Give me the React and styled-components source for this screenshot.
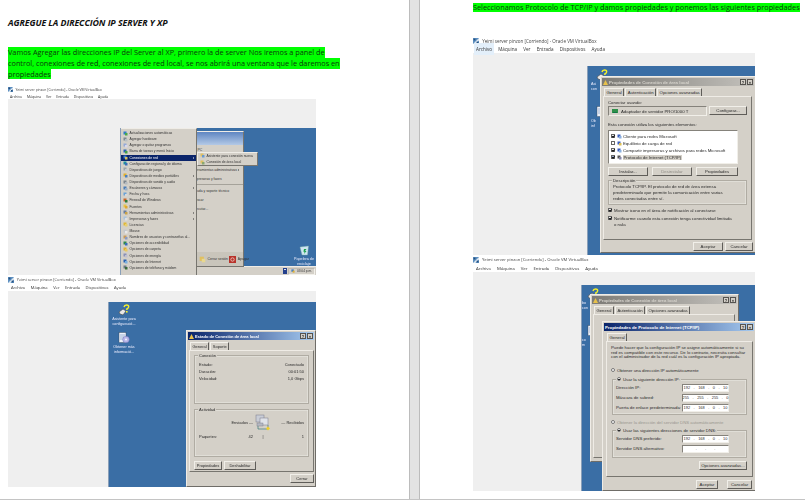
import React from "react";
import styled, { createGlobalStyle } from "styled-components";

const Global = createGlobalStyle`
  html, body { margin: 0; padding: 0; background: #fff; overflow: hidden; }
  * { box-sizing: border-box; }
`;

const Viewer = styled.div`
  display: flex; width: 805px; height: 500px; background: #fff;
  border-bottom: 1px solid #c4c4c4; overflow: hidden;
  font-family: "Open Sans", "Liberation Sans", sans-serif;
`;
const LeftPage = styled.section`
  flex: none; width: 409px; padding: 18px 0 0 8px; display: flex; flex-direction: column;
`;
const Gutter = styled.div`
  flex: none; width: 11px; background: #e3e3e3; border-left: 1px solid #bcbcbc; border-right: 1px solid #bcbcbc;
`;
const RightPage = styled.section`
  flex: 1; min-width: 0; padding: 3px 0 0 53px; display: flex; flex-direction: column;
`;
const Heading = styled.h1`
  margin: 0 0 19px; height: 10px; font-size: 8.8px; line-height: 10px; font-weight: 700; font-style: italic; color: #111;
  letter-spacing: -0.07px; white-space: nowrap;
`;
const Para = styled.div`margin-bottom: ${p => p.$mb}px;`;
const Mark = styled.span`
  display: block; width: fit-content; height: ${p => p.$h || 11}px; line-height: ${p => p.$h || 11}px;
  background: #00ff00; font-size: 7.3px; color: #0a3a0a; white-space: nowrap;
`;

const Shot = styled.figure`
  margin: 0; width: ${p => p.$w}px; font-family: "Open Sans", sans-serif; filter: blur(0.35px);
`;
const VmTitle = styled.div`
  height: ${p => p.$h}px; display: flex; align-items: center; gap: 0.7em;
  font-size: ${p => p.$fs}px; color: #444; white-space: nowrap;
`;
const VmMenu = styled.div`
  height: ${p => p.$h}px; display: flex; align-items: center; gap: 1.35em; padding-left: ${p => p.$pl}px;
  font-size: ${p => p.$fs}px; color: #333; white-space: nowrap;
`;
const VmMenuItem = styled.span`
  ${p => p.$hot && `background:#e3effa; box-shadow: 0 0 0 2px #e3effa; height: 100%; display:flex; align-items:center;`}
`;
const VmBody = styled.div`
  height: ${p => p.$h}px; background: #efefef; display: flex; justify-content: flex-end; align-items: flex-end;
`;
const Desktop = styled.div`
  position: relative; width: ${p => p.$w}px; height: ${p => p.$h}px; background: #3a6ea5; overflow: hidden;
  display: flex; flex-direction: column; justify-content: flex-end;
  font-family: "Liberation Sans", sans-serif; border-left: 1px solid #8a9fb8;
`;
const Taskbar = styled.div`
  height: 9px; background: #d4d0c8; border-top: 1px solid #efece6; display: flex; justify-content: flex-end; align-items: center; gap: 1px; padding-right: 1px;
`;
const Tray = styled.div`
  display: flex; align-items: center; gap: 2px; height: 7px; padding: 0 2px; font-size: 3.2px; color: #333;
  border: 1px solid #bdb9b0; border-right-color: #f2f0ea; border-bottom-color: #f2f0ea;
`;
const Float = styled.div`
  position: absolute; left: ${p => p.$l}px; top: ${p => p.$t}px; width: ${p => p.$w}px; height: ${p => p.$h}px;
`;
const DeskIconBox = styled(Float)`
  display: flex; flex-direction: column; align-items: center; gap: 1px; color: #eef; font-size: 3.7px; line-height: 4.6px; text-align: center; white-space: nowrap;
`;
const DeskLabel = styled.span`
  ${p => p.$edge && `align-self: flex-start; margin-left: ${p.$edge}px; text-align: left;`}
`;

const StartMenu = styled(Float)`
  background: #d4d0c8; border-right: 1px solid #77756f; border-top: 1px solid #efece6; display: flex; flex-direction: column; padding-top: 1px;
`;
const StartItem = styled.div`
  height: 6.13px; display: flex; align-items: center; gap: 2px; padding: 0 2px 0 1.5px; font-size: 3.4px; white-space: nowrap;
  color: ${p => p.$on ? "#fff" : "#333"}; background: ${p => p.$on ? "#0a246a" : "transparent"};
`;
const Grow = styled.span`flex: 1;`;
const Arrow = styled.i`
  width: 0; height: 0; border-left: 1.6px solid currentColor; border-top: 1.3px solid transparent; border-bottom: 1.3px solid transparent;
`;
const StartPanel = styled(Float)`
  background: #d4d0c8; border: 1px solid #efece6; border-right-color: #77756f; border-bottom-color: #77756f; display: flex; flex-direction: column;
`;
const PanelHead = styled.div`
  height: 13px; flex: none; background: linear-gradient(#5f86c2, #b3c9e6);
`;
const PanelItem = styled.div`
  height: ${p => p.$h || 9}px; flex: none; display: flex; align-items: center; padding: 0 4px 0 15px; font-size: 3.4px; color: #333; white-space: nowrap;
`;
const PanelRule = styled.div`height: 1px; flex: none; margin: 1px 0; background: #a5a29a;`;
const PanelFoot = styled.div`
  margin-top: auto; height: 14px; background: #c9c5bb; display: flex; align-items: center; gap: 1.5px; padding-left: 21px; font-size: 3.4px; color: #333; white-space: nowrap;
`;
const Submenu = styled(Float)`
  background: #d4d0c8; border: 1px solid #efece6; border-right-color: #77756f; border-bottom-color: #77756f;
  display: flex; flex-direction: column; justify-content: center; gap: 0.5px; z-index: 2;
`;

const Win = styled(Float)`
  background: #d4d0c8; color: #2a2a2a; font-size: ${p => p.$fs}px; display: flex; flex-direction: column; padding: 1px;
  border: 1px solid; border-color: #efece6 #6f6d68 #6f6d68 #efece6; z-index: ${p => p.$z || 1};
`;
const WinTitle = styled.div`
  height: 8px; flex: none; display: flex; align-items: center; gap: 1px; padding: 0 1px; font-weight: 700; white-space: nowrap;
  color: ${p => p.$on ? "#fff" : "#d6d3cc"};
  background: linear-gradient(90deg, ${p => p.$on ? "#0a246a, #a6caf0" : "#7d7b76, #c3c1bc"});
`;
const WinCtl = styled.span`
  width: 6px; height: 6px; background: #d4d0c8; border: 0.5px solid #55534f; color: #222; font-size: 4px; line-height: 5px; text-align: center; font-weight: 700; flex: none;
`;
const TabRow = styled.div`
  display: flex; height: 8px; margin: 2px 0 0 ${p => p.$ml}px; flex: none; position: relative; z-index: 1;
`;
const Tab = styled.span`
  padding: 0 1.5px; line-height: 8px; white-space: nowrap; border: 0.5px solid #f2f0ea; border-right-color: #5f5d59; border-bottom: 0; margin-right: 1px; background: #d4d0c8;
`;
const TabPanel = styled.div`
  flex: 1; min-height: 0; margin: ${p => p.$m}; padding: ${p => p.$p}; display: flex; flex-direction: column; gap: ${p => p.$gap || 0}px;
  border: 1px solid; border-color: #efece6 #77756f #77756f #efece6;
`;
const Group = styled.div`
  position: relative; flex: none; height: ${p => p.$h}px; padding: ${p => p.$p}; margin: ${p => p.$m || 0};
  border: 1px solid #b0aca3; box-shadow: inset 0 0 0 0.5px #ecebe6;
`;
const DescGroup = styled(Group)`line-height: 6px; white-space: nowrap;`;
const Legend = styled.span`
  position: absolute; top: -3px; left: 3px; background: #d4d0c8; padding: 0 1px; line-height: 5px; white-space: nowrap;
`;
const KV = styled.div`
  display: flex; justify-content: space-between; height: 7px; line-height: 7px; white-space: nowrap;
`;
const ActivityGrid = styled.div`
  display: grid; grid-template-columns: 22px 32px 20px 1fr; grid-template-rows: 19px 8px; align-items: center;
`;
const Cell = styled.span`
  text-align: ${p => p.$a || "left"}; white-space: nowrap; display: ${p => p.$flex ? "flex" : "block"}; justify-content: center;
`;
const Btn = styled.span`
  flex: none; display: flex; align-items: center; justify-content: center; width: ${p => p.$w}px; height: ${p => p.$h || 9}px;
  white-space: nowrap; color: ${p => p.$off ? "#8f8c85" : "#2a2a2a"};
  border: 1px solid; border-color: #f1efe9 #5f5d59 #5f5d59 #f1efe9;
`;
const BtnRow = styled.div`
  display: flex; gap: ${p => p.$gap || 2}px; margin: ${p => p.$m || 0}; justify-content: ${p => p.$end ? "flex-end" : "flex-start"}; flex: none;
`;
const Label = styled.div`
  line-height: ${p => p.$lh || 6}px; height: ${p => p.$lh || 6}px; margin: ${p => p.$m || 0}; white-space: nowrap; flex: none;
`;
const AdapterBox = styled.div`
  flex: 1; height: 10px; display: flex; align-items: center; gap: 3px; padding-left: 3px; white-space: nowrap;
  border: 1px solid; border-color: #85827b #f1efe9 #f1efe9 #85827b;
`;
const ListBox = styled.div`
  height: 34px; width: 130px; background: #fff; padding: 1.5px 0 0 2px; border: 1px solid; border-color: #85827b #f1efe9 #f1efe9 #85827b; flex: none;
`;
const ListRow = styled.div`
  height: 7px; display: flex; align-items: center; gap: 1.5px; white-space: nowrap;
`;
const Box = styled.i`
  width: 4px; height: 4px; flex: none; background: ${p => p.$bg || "#fff"}; border: 0.7px solid #666; position: relative;
  ${p => p.$on && `&::after{content:"";position:absolute;left:0.3px;top:0.1px;width:2px;height:1.2px;border-left:0.8px solid #111;border-bottom:0.8px solid #111;transform:rotate(-45deg);}`}
`;
const Dot = styled.i`
  width: 4px; height: 4px; flex: none; border-radius: 50%; background: #fff; border: 0.7px solid #777; display: flex; align-items: center; justify-content: center;
  ${p => p.$on && `&::after{content:"";width:1.4px;height:1.4px;border-radius:50%;background:#111;}`}
`;
const Selected = styled.span`background: #d4d0c8; padding: 0 0.5px;`;
const CheckLine = styled.div`
  display: flex; gap: 2px; align-items: flex-start; line-height: 6.5px; white-space: nowrap; flex: none; margin: ${p => p.$m || 0};
`;
const RadioLine = styled.div`
  display: flex; gap: 2px; align-items: center; height: ${p => p.$h || 7}px; white-space: nowrap; flex: none; margin: ${p => p.$m || 0}; color: ${p => p.$off ? "#99968f" : "inherit"};
`;
const FieldRow = styled.div`
  display: flex; align-items: center; justify-content: space-between; height: 8px; margin-bottom: ${p => p.$mb ?? 2}px; white-space: nowrap;
`;
const IpBox = styled.span`
  width: 47px; height: 8px; flex: none; background: #fff; display: flex; justify-content: center; gap: 3.5px; align-items: center; font-size: 3.9px;
  border: 0.7px solid; border-color: #85827b #f1efe9 #f1efe9 #85827b;
`;

/* ---- drawings ---- */
const Glyph = ({ s = 5, c = "#3b7bc8", d = "#e0b030" }) => (
  <svg width={s} height={s} viewBox="0 0 10 10" style={{ flex: "none" }}>
    <rect x="1" y="1" width="6" height="6" fill={c} />
    <rect x="4" y="4" width="5" height="5" fill={d} />
  </svg>
);
const VmLogo = ({ s }) => (
  <svg width={s} height={s} viewBox="0 0 10 10" style={{ flex: "none" }}>
    <rect width="10" height="10" fill="#5d8fc0" />
    <path d="M0 10 L10 0 V4 L4 10Z" fill="#dfe9f2" />
    <rect x="1" y="1" width="3" height="3" fill="#24507f" />
    <rect x="6" y="6" width="3" height="3" fill="#24507f" />
  </svg>
);
const HelpIcon = () => (
  <svg width="12" height="12" viewBox="0 0 12 12" style={{ flex: "none" }}>
    <path d="M1 8 L5 5 L8 7 L5 11 L2 10Z" fill="#e8e8e8" stroke="#444" strokeWidth="0.6" />
    <path d="M6 3 Q6.5 1 8.5 1 Q11 1 10.6 3 Q10.4 4.3 9 4.8 L8.8 6" fill="none" stroke="#f6f02a" strokeWidth="1.5" />
    <rect x="8" y="7" width="1.6" height="1.6" fill="#f6f02a" />
  </svg>
);
const InfoIcon = () => (
  <svg width="12" height="12" viewBox="0 0 12 12" style={{ flex: "none" }}>
    <rect x="1" y="0.5" width="7" height="10" fill="#eef2fa" stroke="#345" strokeWidth="0.4" />
    <path d="M2 3h5M2 5h4M2 7h3" stroke="#6a8ac0" strokeWidth="0.6" />
    <circle cx="8" cy="7.5" r="3.3" fill="#b7b5e8" stroke="#5b63a8" strokeWidth="0.4" />
    <circle cx="8" cy="7.5" r="1" fill="#f4f4ff" />
  </svg>
);
const BinIcon = () => (
  <svg width="11" height="11" viewBox="0 0 11 11" style={{ flex: "none" }}>
    <path d="M1 2 L9.5 1 L8.5 10 H3Z" fill="#cfe6f0" stroke="#7aa" strokeWidth="0.4" />
    <path d="M5 4 L7.5 4 L6 6 L7.5 6 L5 9 L5.6 6.8 L4.4 6.8Z" fill="#19a04a" />
  </svg>
);
const NetIcon = () => (
  <svg width="18" height="18" viewBox="0 0 18 18">
    <rect x="2" y="1" width="8" height="7" fill="#c9cdd6" stroke="#778" strokeWidth="0.5" />
    <rect x="6" y="4" width="8" height="7" fill="#dfe2e8" stroke="#778" strokeWidth="0.5" />
    <rect x="3" y="9" width="6" height="3" fill="#b4b8c2" stroke="#778" strokeWidth="0.4" />
    <path d="M4 12 V15 H14 M14 11 V15" fill="none" stroke="#3a7a7a" strokeWidth="0.7" />
    <path d="M12 14.5 L14 12.5 L16 14.5 L14 16.5Z" fill="#f2cf2a" />
  </svg>
);
const ShieldLogo = () => (
  <svg width="4" height="6" viewBox="0 0 4 6" style={{ flex: "none" }}><rect width="4" height="6" fill="#24408c" /><rect x="1" y="1" width="2" height="1" fill="#dde" /></svg>
);
const Power = ({ c }) => (
  <svg width="7" height="7" viewBox="0 0 7 7" style={{ flex: "none" }}><rect width="7" height="7" fill={c} /><circle cx="3.5" cy="3.5" r="1.7" fill="none" stroke="#f3e9e0" strokeWidth="0.7" /></svg>
);
const NicGreen = () => (
  <svg width="6" height="4" viewBox="0 0 6 4" style={{ flex: "none" }}><rect width="6" height="4" fill="#2f8f4a" /><rect x="1" y="3" width="4" height="1" fill="#174" /></svg>
);
const WarnSmall = () => (
  <svg width="5" height="5" viewBox="0 0 5 5" style={{ flex: "none" }}><path d="M2.5 0 L5 5 H0Z" fill="#e8c14a" /></svg>
);

const startItems = [
  ["Actualizaciones automáticas", "#2f7dc8", "#4aa84a"],
  ["Agregar hardware", "#7b8a94", "#b9c0c4"],
  ["Agregar o quitar programas", "#94a9d8", "#d8d8ec"],
  ["Barra de tareas y menú Inicio", "#2a62b0", "#45a04a"],
  ["Conexiones de red", "#3b7bc8", "#d8c060", true, true],
  ["Configuración regional y de idioma", "#1f8f9f", "#3a6fb8"],
  ["Dispositivos de juego", "#9aa4ac", "#c8ccd0"],
  ["Dispositivos de medios portátiles", "#e0b030", "#4a80c0", false, true],
  ["Dispositivos de sonido y audio", "#7d868e", "#b4bac0"],
  ["Escáneres y cámaras", "#4a7db8", "#9ab0c8", false, true],
  ["Fecha y hora", "#6aa2d8", "#d8d8d8"],
  ["Firewall de Windows", "#c8662a", "#2f7a3a"],
  ["Fuentes", "#e8c24a", "#e0a830"],
  ["Herramientas administrativas", "#6a7fa0", "#c8a24a", false, true],
  ["Impresoras y faxes", "#a8c4e0", "#e0e0e0", false, true],
  ["Licencias", "#e0b838", "#e8d070"],
  ["Mouse", "#c4c8cc", "#e8e8e8"],
  ["Nombres de usuarios y contraseñas al...", "#c89a5a", "#8a9ac0"],
  ["Opciones de accesibilidad", "#2f8a4a", "#3a6fb8"],
  ["Opciones de carpeta", "#e0b030", "#e8c860"],
  ["Opciones de energía", "#8a90b8", "#c0c0d0"],
  ["Opciones de Internet", "#2a62b0", "#7ab0e0"],
  ["Opciones de teléfono y módem", "#6a7a88", "#3a6a3a"],
];

const menuNames = ["Archivo", "Máquina", "Ver", "Entrada", "Dispositivos", "Ayuda"];

const VmChrome = ({ w, titleH, menuH, titleFs, menuFs, logo, pl, hot, bodyH, children }) => (
  <Shot $w={w}>
    <VmTitle $h={titleH} $fs={titleFs}><VmLogo s={logo} />Yeimi server pinzon [Corriendo] - Oracle VM VirtualBox</VmTitle>
    <VmMenu $h={menuH} $fs={menuFs} $pl={pl}>
      {menuNames.map((n, i) => <VmMenuItem key={n} $hot={hot && i === 0}>{n}</VmMenuItem>)}
    </VmMenu>
    <VmBody $h={bodyH}>{children}</VmBody>
  </Shot>
);

const DeskIcon = ({ l, t, icon, edge, children }) => (
  <DeskIconBox $l={l} $t={t} $w={30} $h={26}>{icon}<DeskLabel $edge={edge}>{children}</DeskLabel></DeskIconBox>
);

const TitleRow = ({ on, children, warn = true }) => (
  <WinTitle $on={on}>
    {warn && <WarnSmall />}{children}<Grow /><WinCtl>?</WinCtl><WinCtl>×</WinCtl>
  </WinTitle>
);

const ConnTabs = () => (
  <TabRow $ml={2}><Tab>General</Tab><Tab>Autenticación</Tab><Tab>Opciones avanzadas</Tab></TabRow>
);

export default function App() {
  return (
    <Viewer>
      <Global />
      <LeftPage>
        <Heading>AGREGUE LA DIRECCIÓN IP SERVER Y XP</Heading>
        <Para $mb={6}>
          <Mark>Vamos Agregar las direcciones IP del Server al XP, primero la de server Nos iremos a panel de</Mark>
          <Mark>control, conexiones de red, conexiones de red local, se nos abrirá una ventana que le daremos en</Mark>
          <Mark $h={10}>propiedades</Mark>
        </Para>
        <VmChrome w={308} titleH={8} menuH={6} titleFs={3.4} menuFs={3.5} logo={5} pl={2} bodyH={176}>
          <Desktop $w={196} $h={147}>
            <DeskIcon l={168} t={117} icon={<BinIcon />}>Papelera de<br />reciclaje</DeskIcon>
            <StartPanel $l={56} $t={3} $w={67} $h={136}>
              <PanelHead />
              <PanelItem $h={10}>Mi PC</PanelItem>
              <PanelItem $h={10} />
              <PanelItem>Herramientas administrativas<Grow /><Arrow /></PanelItem>
              <PanelItem>Impresoras y faxes</PanelItem>
              <PanelRule />
              <PanelItem>Ayuda y soporte técnico</PanelItem>
              <PanelItem>Buscar</PanelItem>
              <PanelItem>Ejecutar...</PanelItem>
              <PanelFoot><Glyph s={7} c="#e0c060" d="#e8d890" />Cerrar sesión<Power c="#b8322a" />Apagar</PanelFoot>
            </StartPanel>
            <StartMenu $l={0} $t={0} $w={76} $h={147}>
              {startItems.map(([n, c, d, on, arrow]) => (
                <StartItem key={n} $on={on}>
                  <Glyph s={5} c={c} d={d} />{n}<Grow />{arrow && <Arrow />}
                </StartItem>
              ))}
            </StartMenu>
            <Submenu $l={76} $t={24} $w={61} $h={14}>
              <StartItem><Glyph s={5} c="#e0c060" d="#6a9ad0" />Asistente para conexión nueva</StartItem>
              <StartItem><Glyph s={5} c="#e0c060" d="#8aa870" />Conexión de área local</StartItem>
            </Submenu>
            <Taskbar>
              <ShieldLogo />
              <Tray><Glyph s={4} c="#3b7bc8" d="#e0b030" />03:04 p.m.</Tray>
            </Taskbar>
          </Desktop>
        </VmChrome>

        <VmChrome w={308} titleH={9} menuH={7} titleFs={3.9} menuFs={4.1} logo={6} pl={3} bodyH={196}>
          <Desktop $w={208} $h={185}>
            <DeskIcon l={0} t={2} icon={<HelpIcon />}>Asistente para<br />configuració...</DeskIcon>
            <DeskIcon l={0} t={30} icon={<InfoIcon />}>Obtener más<br />informació...</DeskIcon>
            <Win $l={77} $t={28} $w={130} $h={157} $fs={4}>
              <TitleRow on>Estado de Conexión de área local</TitleRow>
              <TabRow $ml={2}><Tab>General</Tab><Tab>Soporte</Tab></TabRow>
              <TabPanel $m="0 0 0 1px" $p="4px 4px 0" $gap={5}>
                <Group $h={49} $p="5px 4px">
                  <Legend>Conexión</Legend>
                  <KV><span>Estado:</span><span>Conectado</span></KV>
                  <KV><span>Duración:</span><span>00:01:50</span></KV>
                  <KV><span>Velocidad:</span><span>1,0 Gbps</span></KV>
                </Group>
                <Group $h={48} $p="3px 4px">
                  <Legend>Actividad</Legend>
                  <ActivityGrid>
                    <span />
                    <Cell $a="right">Enviados —</Cell>
                    <Cell $flex><NetIcon /></Cell>
                    <Cell $a="right">— Recibidos</Cell>
                    <span>Paquetes:</span>
                    <Cell $a="right">42</Cell>
                    <Cell $a="center">|</Cell>
                    <Cell $a="right">1</Cell>
                  </ActivityGrid>
                </Group>
                <BtnRow $m="-1px 0 0">
                  <Btn $w={28}>Propiedades</Btn>
                  <Btn $w={32}>Deshabilitar</Btn>
                </BtnRow>
              </TabPanel>
              <BtnRow $end $m="2px 0 2px"><Btn $w={24}>Cerrar</Btn></BtnRow>
            </Win>
          </Desktop>
        </VmChrome>
      </LeftPage>

      <Gutter />

      <RightPage>
        <Para $mb={24}>
          <Mark $h={9}>Seleccionamos Protocolo de TCP/IP y damos propiedades y ponemos las siguientes propiedades</Mark>
        </Para>
        <VmChrome w={282} titleH={9} menuH={8} titleFs={4.5} menuFs={4.6} logo={6} pl={3} hot bodyH={202}>
          <Desktop $w={168} $h={189}>
            <DeskIcon l={-1} t={3} edge={4} icon={<HelpIcon />}>Asi<br />con</DeskIcon>
            <DeskIcon l={-1} t={40} edge={4} icon={<InfoIcon />}>Ob<br />inf</DeskIcon>
            <Win $l={12} $t={10} $w={156} $h={177} $fs={4.3}>
              <TitleRow>Propiedades de Conexión de área local</TitleRow>
              <ConnTabs />
              <TabPanel $m="0 2px 0 1px" $p="3px 4px 0">
                <Label>Conectar usando:</Label>
                <BtnRow $m="0 0 0">
                  <AdapterBox><NicGreen />Adaptador de servidor PRO/1000 T</AdapterBox>
                  <Btn $w={38}>Configurar...</Btn>
                </BtnRow>
                <Label $m="6px 0 2px">Esta conexión utiliza los siguientes elementos:</Label>
                <ListBox>
                  <ListRow><Box $on /><Glyph s={5} c="#3b5fc0" d="#8ab0e0" />Cliente para redes Microsoft</ListRow>
                  <ListRow><Box /><Glyph s={5} c="#3b5fc0" d="#e0c050" />Equilibrio de carga de red</ListRow>
                  <ListRow><Box $on /><Glyph s={5} c="#3b5fc0" d="#8ab0e0" />Compartir impresoras y archivos para redes Microsoft</ListRow>
                  <ListRow><Box $on $bg="#9fb3d8" /><Glyph s={5} c="#555" d="#88a" /><Selected>Protocolo de Internet (TCP/IP)</Selected></ListRow>
                </ListBox>
                <BtnRow $m="3px 0 0" $gap={4}>
                  <Btn $w={40}>Instalar...</Btn>
                  <Btn $w={40} $off>Desinstalar</Btn>
                  <Btn $w={42}>Propiedades</Btn>
                </BtnRow>
                <DescGroup $h={25} $p="3px 4px" $m="4px 0 3px">
                  <Legend>Descripción</Legend>
                  <div>Protocolo TCP/IP. El protocolo de red de área extensa</div>
                  <div>predeterminado que permite la comunicación entre varias</div>
                  <div>redes conectadas entre sí.</div>
                </DescGroup>
                <CheckLine><Box $on />Mostrar icono en el área de notificación al conectarse</CheckLine>
                <CheckLine $m="1px 0 0"><Box $on /><div>Notificarme cuando esta conexión tenga conectividad limitada<br />o nula</div></CheckLine>
              </TabPanel>
              <BtnRow $end $gap={2} $m="2px 1px 0"><Btn $w={30}>Aceptar</Btn><Btn $w={28}>Cancelar</Btn></BtnRow>
            </Win>
          </Desktop>
        </VmChrome>

        <VmChrome w={282} titleH={9} menuH={8} titleFs={4.2} menuFs={4.35} logo={6} pl={3} bodyH={219}>
          <Desktop $w={174} $h={206}>
            <DeskIcon l={-4} t={3} edge={4} icon={<HelpIcon />}>bo<br />con</DeskIcon>
            <DeskIcon l={-4} t={40} edge={4} icon={<InfoIcon />}>co<br />m</DeskIcon>
            <Win $l={8} $t={9} $w={149} $h={168} $fs={4.2}>
              <TitleRow>Propiedades de Conexión de área local</TitleRow>
              <ConnTabs />
              <TabPanel $m="0 2px 2px 1px" $p="3px 4px" />
            </Win>
            <Win $l={20} $t={36} $w={154} $h={170} $fs={4.3} $z={2}>
              <TitleRow on warn={false}>Propiedades de Protocolo de Internet (TCP/IP)</TitleRow>
              <TabRow $ml={3}><Tab>General</Tab></TabRow>
              <TabPanel $m="0 1px 0 2px" $p="4px 4px 0">
                <Label $lh={4.6}>Puede hacer que la configuración IP se asigne automáticamente si su</Label>
                <Label $lh={4.6}>red es compatible con este recurso. De lo contrario, necesita consultar</Label>
                <Label $lh={4.6}>con el administrador de la red cuál es la configuración IP apropiada.</Label>
                <RadioLine $m="7px 0 0"><Dot />Obtener una dirección IP automáticamente</RadioLine>
                <Group $h={36} $p="4px 17px 0 3px" $m="5px 1px 0 1px">
                  <Legend><RadioLine $h={5}><Dot $on />Usar la siguiente dirección IP:</RadioLine></Legend>
                  <FieldRow><span>Dirección IP:</span><IpBox><span>192</span>.<span>168</span>.<span>0</span>.<span>10</span></IpBox></FieldRow>
                  <FieldRow><span>Máscara de subred:</span><IpBox><span>255</span>.<span>255</span>.<span>255</span>.<span>0</span></IpBox></FieldRow>
                  <FieldRow $mb={0}><span>Puerta de enlace predeterminada:</span><IpBox><span>192</span>.<span>168</span>.<span>0</span>.<span>10</span></IpBox></FieldRow>
                </Group>
                <RadioLine $off $m="4px 0 0"><Dot />Obtener la dirección del servidor DNS automáticamente</RadioLine>
                <Group $h={28} $p="4px 17px 0 3px" $m="4px 1px 0 1px">
                  <Legend><RadioLine $h={5}><Dot $on />Usar las siguientes direcciones de servidor DNS:</RadioLine></Legend>
                  <FieldRow><span>Servidor DNS preferido:</span><IpBox><span>192</span>.<span>168</span>.<span>0</span>.<span>10</span></IpBox></FieldRow>
                  <FieldRow $mb={0}><span>Servidor DNS alternativo:</span><IpBox><span>&nbsp;</span>.<span>&nbsp;</span>.<span>&nbsp;</span>.<span>&nbsp;</span></IpBox></FieldRow>
                </Group>
                <BtnRow $end $m="3px 1px 0"><Btn $w={48}>Opciones avanzadas...</Btn></BtnRow>
              </TabPanel>
              <BtnRow $end $gap={9} $m="3px 2px 0"><Btn $w={22}>Aceptar</Btn><Btn $w={25}>Cancelar</Btn></BtnRow>
            </Win>
          </Desktop>
        </VmChrome>
      </RightPage>
    </Viewer>
  );
}
